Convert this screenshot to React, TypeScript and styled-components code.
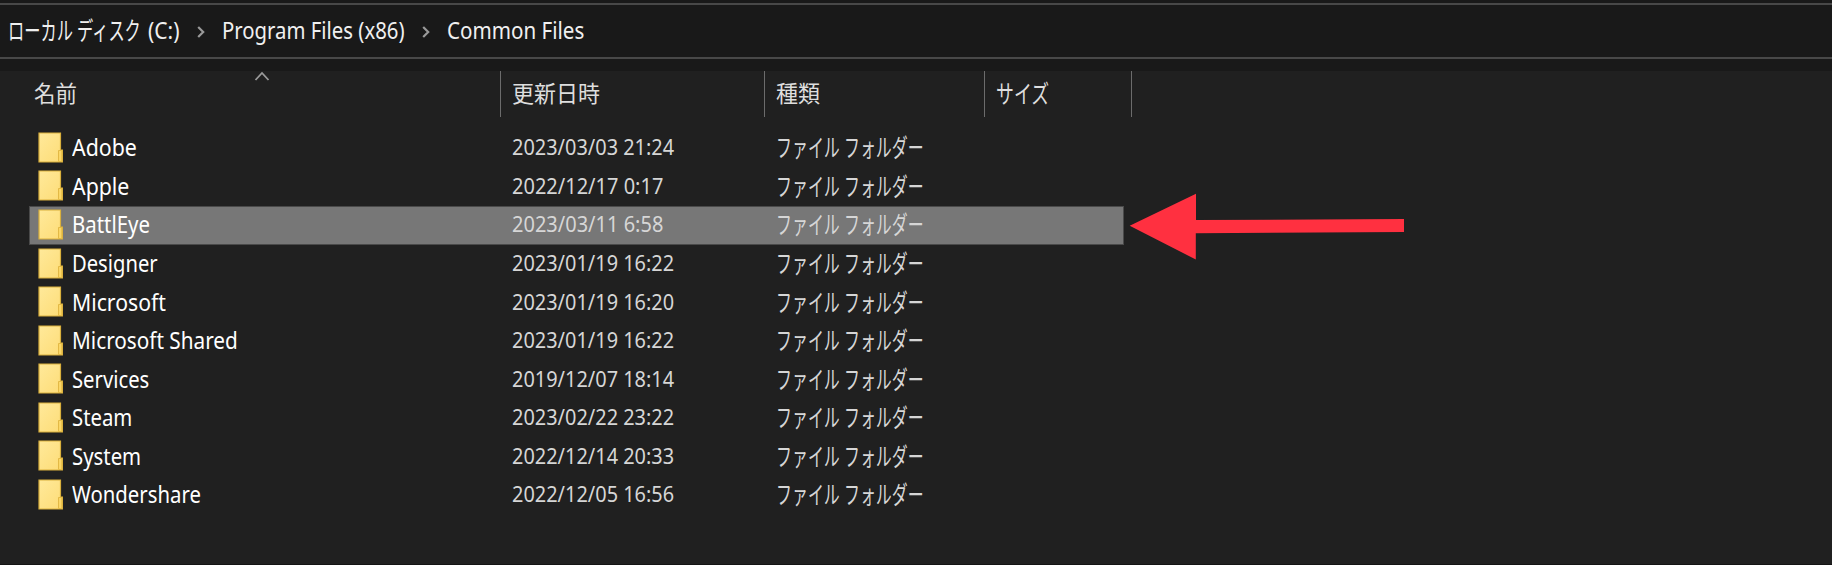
import React, { useLayoutEffect, useRef, useState } from 'react';
import styled, { createGlobalStyle } from 'styled-components';

const GlobalStyle = createGlobalStyle`
  * { box-sizing: border-box; }
  body { margin: 0; background: #202020; }
`;

const Window = styled.main`
  position: relative;
  display: flex;
  flex-direction: column;
  width: 1832px;
  height: 565px;
  overflow: hidden;
  background: #202020;
  border-bottom: 1px solid #141414;
  font-family: 'Noto Sans', 'Noto Sans CJK JP', sans-serif;
  font-size: 23px;
  color: #fff;
`;

const AddressArea = styled.div`
  height: 71px;
  flex: none;
  padding-top: 3px;
  background: #191919;
`;

const AddressBar = styled.nav`
  display: flex;
  align-items: center;
  height: 56px;
  padding: 0 0 2px 8px;
  border-top: 2px solid #484848;
  border-bottom: 2px solid #484848;
  color: #f0f0f0;
`;

const Drive = styled.div`
  display: flex;
  gap: 7px;
`;

const Chevron = styled.svg<{ $before: number; $after: number }>`
  flex: none;
  width: 8px;
  height: 14px;
  margin: 4px ${(p) => p.$after}px 0 ${(p) => p.$before}px;
`;

const columns = '472px 264px 220px 147px';

const Header = styled.div`
  display: grid;
  grid-template-columns: ${columns};
  flex: none;
  height: 58px;
  padding-left: 29px;
`;

const HeaderCell = styled.div<{ $indent: number }>`
  position: relative;
  height: 46px;
  padding: 6px 0 0 ${(p) => p.$indent}px;
  border-right: 1px solid #6c6c6c;
  color: #dedede;
  line-height: 32px;
`;

const SortMark = styled.svg`
  position: absolute;
  left: 225px;
  top: 0;
  width: 16px;
  height: 10px;
`;

const Rows = styled.div`
  display: flex;
  flex-direction: column;
  padding-left: 29px;
`;

const Row = styled.div<{ $selected?: boolean }>`
  display: grid;
  grid-template-columns: ${columns};
  align-items: center;
  width: 1095px;
  height: 38.58px;
  padding-bottom: 2px;
  background: ${(p) => (p.$selected ? '#777' : 'transparent')};
  outline: ${(p) => (p.$selected ? '1px solid #4a4a4a' : 'none')};
  outline-offset: -1px;
`;

const NameCell = styled.div`
  display: flex;
  align-items: center;
  padding-left: 9px;
  gap: 9px;
`;

const Cell = styled.div`
  padding-left: 11px;
  color: #d6d6d6;
`;

const Folder = styled.svg`
  flex: none;
  width: 25px;
  height: 31px;
`;

const LabelBox = styled.div`
  flex: none;
`;

const Label = styled.span<{ $size: number }>`
  display: block;
  width: max-content;
  font-size: ${(p) => p.$size}px;
  line-height: 32px;
  white-space: pre;
  transform-origin: 0 50%;
`;

const Arrow = styled.svg`
  position: absolute;
  left: 1128px;
  top: 190px;
  width: 280px;
  height: 74px;
`;

function FitText({ children, width, size = 23 }: { children: string; width: number; size?: number }) {
  const ref = useRef<HTMLSpanElement>(null);
  const [scale, setScale] = useState(1);
  useLayoutEffect(() => {
    if (ref.current) setScale(width / ref.current.offsetWidth);
  }, [width, size, children]);
  return (
    <LabelBox style={{ width }}>
      <Label ref={ref} $size={size} style={{ transform: `scaleX(${scale})` }}>{children}</Label>
    </LabelBox>
  );
}

function FolderIcon() {
  return (
    <Folder viewBox="0 0 25 31">
      <defs>
        <linearGradient id="folder" x1="0" y1="0" x2="1" y2="1">
          <stop offset="0" stopColor="#ffe99a" />
          <stop offset="1" stopColor="#fddc76" />
        </linearGradient>
      </defs>
      <path d="M1 1H22.5V18H24.5V30H1Z" fill="url(#folder)" stroke="#d9b03c" strokeWidth="1.2" />
      <path d="M20.5 29.5V18.5H23.8V29.5Z" fill="#fbd768" stroke="#e3b945" strokeWidth="1" />
    </Folder>
  );
}

function Crumb({ before, after }: { before: number; after: number }) {
  return (
    <Chevron $before={before} $after={after} viewBox="0 0 8 14">
      <path d="M1.2 2 6.2 7 1.2 12" fill="none" stroke="#999" strokeWidth="2.2" />
    </Chevron>
  );
}

const files: [string, number, string, number][] = [
  ['Adobe', 65, '2023/03/03 21:24', 162],
  ['Apple', 57.5, '2022/12/17 0:17', 151],
  ['BattlEye', 78, '2023/03/11 6:58', 151],
  ['Designer', 86, '2023/01/19 16:22', 162],
  ['Microsoft', 94, '2023/01/19 16:20', 162],
  ['Microsoft Shared', 166, '2023/01/19 16:22', 162],
  ['Services', 77.5, '2019/12/07 18:14', 162],
  ['Steam', 60, '2023/02/22 23:22', 162],
  ['System', 69, '2022/12/14 20:33', 162],
  ['Wondershare', 129, '2022/12/05 16:56', 162],
];

export default function App() {
  return (
    <>
      <GlobalStyle />
      <Window>
        <AddressArea>
          <AddressBar>
            <Drive>
              <FitText width={133} size={25}>ローカル ディスク</FitText>
              <FitText width={32}>(C:)</FitText>
            </Drive>
            <Crumb before={17} after={17} />
            <FitText width={183}>Program Files (x86)</FitText>
            <Crumb before={17} after={17} />
            <FitText width={137}>Common Files</FitText>
          </AddressBar>
        </AddressArea>
        <Header>
          <HeaderCell $indent={5}>
            <FitText width={43}>名前</FitText>
            <SortMark viewBox="0 0 16 10">
              <path d="M1.5 9 8 2 14.5 9" fill="none" stroke="#9a9a9a" strokeWidth="1.8" />
            </SortMark>
          </HeaderCell>
          <HeaderCell $indent={11}><FitText width={88}>更新日時</FitText></HeaderCell>
          <HeaderCell $indent={11}><FitText width={44}>種類</FitText></HeaderCell>
          <HeaderCell $indent={11}><FitText width={53} size={25}>サイズ</FitText></HeaderCell>
        </Header>
        <Rows>
          {files.map(([name, nameWidth, date, dateWidth]) => (
            <Row key={name} $selected={name === 'BattlEye'}>
              <NameCell>
                <FolderIcon />
                <FitText width={nameWidth}>{name}</FitText>
              </NameCell>
              <Cell><FitText width={dateWidth} size={22.4}>{date}</FitText></Cell>
              <Cell><FitText width={148} size={25}>ファイル フォルダー</FitText></Cell>
            </Row>
          ))}
        </Rows>
        <Arrow viewBox="1128 190 280 74">
          <path d="M1129.7 225.8 1196 193.7V220L1404 219V232L1195.8 233.3V259.5Z" fill="#ff3040" />
        </Arrow>
      </Window>
    </>
  );
}
